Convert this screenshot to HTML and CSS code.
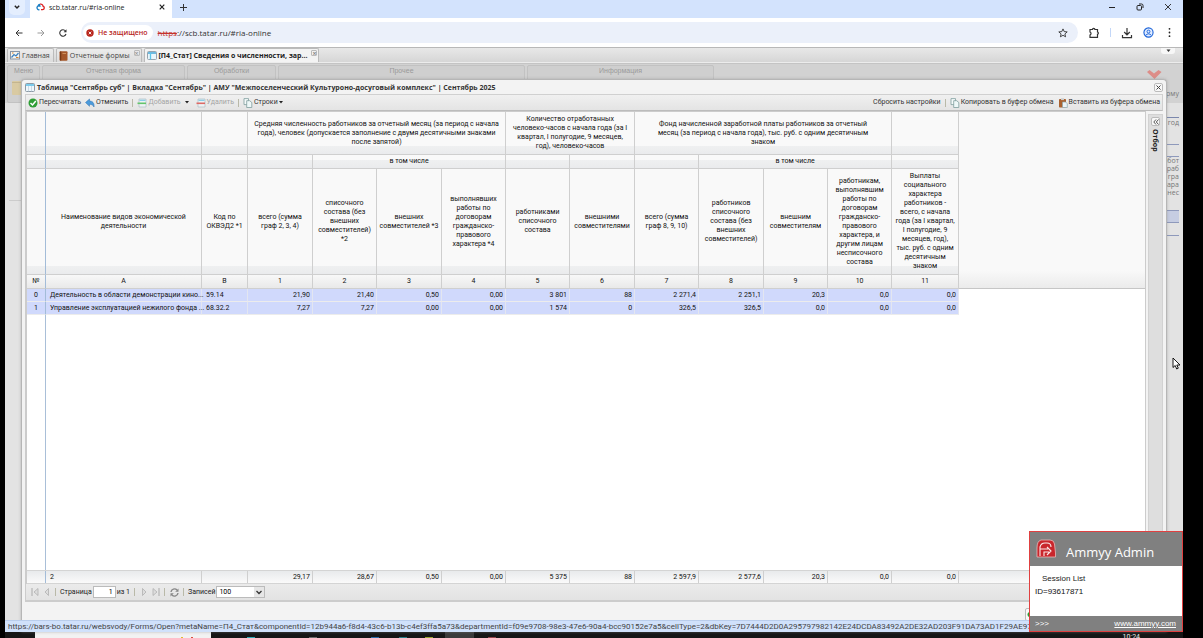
FILE: index.html
```html
<!DOCTYPE html>
<html lang="ru">
<head>
<meta charset="utf-8">
<title>scb.tatar.ru/#ria-online</title>
<link rel="stylesheet" href="styles.css">
</head>
<body>
<div class="screen">
  <header class="tabstrip">
    <button class="tab-search" aria-label="Поиск вкладок"><svg width="6" height="4" viewBox="0 0 6 4"><path d="M.8.7 3 3 5.200.7" fill="none" stroke="#222" stroke-width="1.400"/></svg></button>
    <div class="btab">
      <svg width="10" height="8" viewBox="0 0 10 8"><path d="M5 1.200a2.200 2.200 0 0 1 3 2 1.800 1.800 0 0 1-.4 3.500H6" fill="none" stroke="#d22" stroke-width="1.300"/><path d="M5.500 3.500a2 2 0 1 0-1 3.200M5 1.500A2 2 0 0 0 3 3" fill="none" stroke="#1b7fc4" stroke-width="1.300"/></svg>
      <span class="btab-text">scb.tatar.ru/#ria-online</span>
      <button aria-label="Закрыть вкладку"><svg width="6" height="6" viewBox="0 0 6 6"><path d="M.7.7 5.300 5.300M5.300.7.7 5.300" stroke="#222" stroke-width="1.200"/></svg></button>
    </div>
    <button class="newtab" aria-label="Новая вкладка"><svg width="7" height="7" viewBox="0 0 7 7"><path d="M3.500 0v7M0 3.500h7" stroke="#333" stroke-width="1"/></svg></button>
    <div class="wincontrols">
      <button aria-label="Свернуть"><svg width="8" height="8" viewBox="0 0 8 8"><path d="M1 4.500h6" stroke="#222"/></svg></button>
      <button aria-label="Развернуть"><svg width="8" height="8" viewBox="0 0 8 8"><rect x="1" y="2.500" width="4.500" height="4.500" rx="1" fill="none" stroke="#222"/><path d="M3 1h2.500A1.500 1.500 0 0 1 7 2.500V5" fill="none" stroke="#222"/></svg></button>
      <button aria-label="Закрыть"><svg width="8" height="8" viewBox="0 0 8 8"><path d="M1 1l6 6M7 1 1 7" stroke="#222" stroke-width=".9"/></svg></button>
    </div>
  </header>
  <div class="navbar">
    <button aria-label="Назад"><svg width="8" height="8" viewBox="0 0 8 8"><path d="M7.500 4H1M4 1 1 4l3 3" fill="none" stroke="#333"/></svg></button>
    <button aria-label="Вперёд"><svg width="8" height="8" viewBox="0 0 8 8"><path d="M.5 4H7M4 1l3 3-3 3" fill="none" stroke="#999"/></svg></button>
    <button aria-label="Обновить"><svg width="8" height="8" viewBox="0 0 8 8"><path d="M7 5A3.200 3.200 0 1 1 6.500 2" fill="none" stroke="#333" stroke-width="1.100"/><path d="M7.500.3V3.300H4.600z" fill="#333"/></svg></button>
    <div class="omnibox">
      <button class="chip"><svg width="8" height="8" viewBox="0 0 8 8"><circle cx="4" cy="4" r="3.700" fill="#b8261d"/><path d="M2.700 2.700l2.600 2.600M5.300 2.700 2.700 5.300" stroke="#fff" stroke-width=".9"/></svg>Не защищено</button>
      <a class="url" href="#ria-online"><s>https</s>://scb.tatar.ru/#ria-online</a>
      <button class="star" aria-label="В закладки"><svg width="10" height="10" viewBox="0 0 10 10"><path d="M5 .9l1.200 2.700 3 .3-2.300 2 .7 2.900L5 7.300 2.400 8.800l.7-2.900-2.300-2 3-.3z" fill="none" stroke="#333" stroke-width=".9"/></svg></button>
    </div>
    <div class="navicons">
      <button aria-label="Расширения"><svg width="12" height="12" viewBox="0 0 12 12"><path d="M2 2.500h2.500a1.200 1.200 0 0 1 2.400 0H9.500V5a1.200 1.200 0 0 1 0 2.300V10.300H2V8a1.600 1.600 0 0 0 0-3z" fill="none" stroke="#333" stroke-width="1.200"/></svg></button>
      <i class="navsep"></i>
      <button aria-label="Загрузки"><svg width="12" height="12" viewBox="0 0 12 12"><path d="M6 1v6.500M3.200 5 6 7.800 8.800 5M1.500 8v2.600h9V8" fill="none" stroke="#333" stroke-width="1.200"/></svg></button>
      <button aria-label="Профиль"><svg width="11" height="11" viewBox="0 0 12 12"><circle cx="6" cy="6" r="5" fill="#e3edff" stroke="#1a62d8" stroke-width="1.200"/><circle cx="6" cy="5" r="1.600" fill="none" stroke="#1a62d8"/><path d="M3 9c1.500-2 4.500-2 6 0" fill="none" stroke="#1a62d8"/></svg></button>
      <button aria-label="Меню браузера"><svg width="11" height="11" viewBox="0 0 11 11"><g fill="#222"><circle cx="5.500" cy="1.800" r=".9"/><circle cx="5.500" cy="5.500" r=".9"/><circle cx="5.500" cy="9.200" r=".9"/></g></svg></button>
    </div>
  </div>
  <main class="page">
    <nav class="apptabs">
      <a class="apptab" href="#main"><svg width="10" height="9" viewBox="0 0 10 9"><rect x=".5" y=".5" width="9" height="7.500" fill="#f4f4ee" stroke="#8a96a5"/><path d="M1.500 6.500 4 3.500l2 1.500L8.500 2" fill="none" stroke="#3a7fc0" stroke-width="1.200"/><path d="M6 6.500h2.500M2 2h1.500" stroke="#d9822b"/></svg>Главная</a>
      <a class="apptab" href="#forms"><svg width="9" height="10" viewBox="0 0 9 10"><rect x=".5" y=".3" width="8" height="9.400" rx="1" fill="#a4572a"/><path d="M1.700.5v9" stroke="#6b3312"/><path d="M3.500 2.500h3.500" stroke="#d8a069" stroke-width=".8"/></svg>Отчетные формы<i class="tabx">×</i></a>
      <a class="apptab active" href="#p4"><svg width="10" height="9" viewBox="0 0 10 9"><rect x=".5" y=".5" width="9" height="8" rx="1" fill="#e8f6fc" stroke="#97a4ae"/><path d="M1 2h8" stroke="#6db9df" stroke-width="2"/><path d="M3.500 2v6.500" stroke="#5cc5ea" stroke-width="1.300"/></svg>[П4_Стат] Сведения о численности, зар...<i class="tabx">×</i></a>
      <button class="tabmore" aria-label="Список вкладок"><svg width="5" height="4" viewBox="0 0 5 4"><path d="M.5 0.500h4L2.500 3z" fill="#333"/></svg></button>
    </nav>
    <div class="ribbon">
      <section class="rgroup g-menu">Меню<svg width="10" height="14" viewBox="0 0 10 14"><rect width="10" height="14" rx="1" fill="#d9caa2"/><path d="M0 1.500h10" stroke="#c4b58f"/></svg></section>
      <section class="rgroup g-form">Отчетная форма</section>
      <section class="rgroup g-proc">Обработки</section>
      <section class="rgroup g-other">Прочее</section>
      <section class="rgroup g-info">Информация</section>
      <svg class="redmark" width="16" height="10" viewBox="0 0 16 10"><path d="M1 2 3.500 0 8 3.500 12.500 0 15.500 2 8.500 9z" fill="#dd8d88"/></svg>
    </div>
    <div class="under">
      <div class="under-left"></div>
      <div class="under-right">
        <span class="u-form">рму</span><span class="u-year">год</span><span class="u-gap"></span>
        <span class="u-cell">абот<br>раб<br>гра<br>хара<br>нес</span><span class="u-sel"></span><span class="u-end"></span>
      </div>
    </div>

    <div class="window" role="dialog" aria-label="Таблица">
      <div class="wtitle">
        <svg width="10" height="9" viewBox="0 0 10 9"><rect x=".5" y=".5" width="9" height="8" rx="1" fill="#eef7fb" stroke="#8d9aa5"/><path d="M1 2h8" stroke="#5fc0e8" stroke-width="1.600"/><path d="M3.500 3v5.500M6.500 3v5.500" stroke="#bcd" stroke-width=".7"/></svg>
        <h1>Таблица "Сентябрь суб" | Вкладка "Сентябрь" | АМУ "Межпоселенческий Культуроно-досуговый комплекс" | Сентябрь 2025</h1>
        <button class="wclose" aria-label="Закрыть окно"><svg width="5" height="5" viewBox="0 0 5 5"><path d="M.5.5l4 4M4.500.5l-4 4" stroke="#444"/></svg></button>
      </div>
      <div class="toolbar">
        <button class="tb"><svg width="10" height="10" viewBox="0 0 10 10"><circle cx="5" cy="5" r="4.500" fill="#2f9e35"/><path d="M2.500 5l2 2 3.300-4" fill="none" stroke="#fff" stroke-width="1.500"/></svg>Пересчитать</button>
        <button class="tb"><svg width="10" height="10" viewBox="0 0 10 10"><path d="M.5 4.500 4.500 1v2c3 0 5 2 4.500 6C8 7 6.500 6.300 4.500 6.300v2z" fill="#4b9bdc" stroke="#2a6fae" stroke-width=".5"/></svg>Отменить</button>
        <i class="sep"></i>
        <button class="tb" disabled><svg width="10" height="10" viewBox="0 0 10 10"><path d="M2 1v8h7V1z" fill="#eef3f5" stroke="#b5c3c9" stroke-width=".8"/><path d="M2.500 2.300h6" stroke="#7fcbe8" stroke-width="1.200"/><path d="M.5 5.300h8.500" stroke="#64c46c" stroke-width="1.600"/></svg>Добавить<svg class="caret dark" width="4" height="3" viewBox="0 0 4 3"><path d="M0 0h4L2 2.500z"/></svg></button>
        <button class="tb" disabled><svg width="10" height="10" viewBox="0 0 10 10"><path d="M2 1v8h7V1z" fill="#eef3f5" stroke="#b5c3c9" stroke-width=".8"/><path d="M2.500 2.300h6" stroke="#7fcbe8" stroke-width="1.200"/><path d="M.5 5.300h8.500" stroke="#dd6a66" stroke-width="1.600"/></svg>Удалить</button>
        <i class="sep"></i>
        <button class="tb"><svg width="10" height="10" viewBox="0 0 10 10"><path d="M1 .6h4.500v6H1z" fill="#f5fafa" stroke="#7f9d9d" stroke-width=".8"/><path d="M3.700 2.700h3L8.800 4.500v5H3.700z" fill="#eef8f8" stroke="#7f9d9d" stroke-width=".8"/></svg>Строки<svg class="caret" width="4" height="3" viewBox="0 0 4 3"><path d="M0 0h4L2 2.500z"/></svg></button>
        <span class="spring"></span>
        <button class="tb">Сбросить настройки</button>
        <i class="sep"></i>
        <button class="tb"><svg width="10" height="10" viewBox="0 0 10 10"><path d="M1 .6h4.500v6H1z" fill="#f5fafa" stroke="#7f9d9d" stroke-width=".8"/><path d="M3.700 2.700h3L8.800 4.500v5H3.700z" fill="#eef8f8" stroke="#7f9d9d" stroke-width=".8"/></svg>Копировать в буфер обмена</button>
        <button class="tb"><svg width="10" height="10" viewBox="0 0 10 10"><rect x="1" y="1" width="7" height="8.500" rx=".8" fill="#a9612f"/><rect x="3" y=".3" width="3" height="1.800" fill="#ccc"/><path d="M4.500 4h3l1.800 1.500v4H4.500z" fill="#eaf3f6" stroke="#8aa3ab" stroke-width=".7"/></svg>Вставить из буфера обмена</button>
      </div>
      <div class="wbody">
        <div class="grid">
          <div class="headwrap">
            <table class="data">
              <colgroup><col class="c19"><col class="c156"><col class="c46"><col class="c65"><col class="c64"><col class="c65"><col class="c64"><col class="c64"><col class="c65"><col class="c64"><col class="c65"><col class="c64"><col class="c64"><col class="c67"></colgroup>
              <thead>
                <tr class="h1"><th></th><th></th><th></th><th colspan="4">Средняя численность работников за отчетный месяц (за период с начала года), человек (допускается заполнение с двумя десятичными знаками после запятой)</th><th colspan="2">Количество отработанных человеко-часов с начала года (за I квартал, I полугодие, 9 месяцев, год), человеко-часов</th><th colspan="4" class="wide">Фонд начисленной заработной платы работников за отчетный месяц (за период с начала года), тыс. руб. с одним десятичным знаком</th><th></th></tr>
                <tr class="h2"><th></th><th></th><th></th><th></th><th colspan="3">в том числе</th><th></th><th></th><th></th><th colspan="3">в том числе</th><th></th></tr>
                <tr class="h3"><th></th><th class="name">Наименование видов экономической деятельности</th><th>Код по ОКВЭД2 *1</th><th>всего (сумма граф 2, 3, 4)</th><th>списочного состава (без внешних совместителей) *2</th><th>внешних совместителей *3</th><th>выполнявших работы по договорам гражданско-правового характера *4</th><th>работниками списочного состава</th><th>внешними совместителями</th><th>всего (сумма граф 8, 9, 10)</th><th>работников списочного состава (без внешних совместителей)</th><th>внешним совместителям</th><th>работникам, выполнявшим работы по договорам гражданско-правового характера, и другим лицам несписочного состава</th><th>Выплаты социального характера работников - всего, с начала года (за I квартал, I полугодие, 9 месяцев, год), тыс. руб. с одним десятичным знаком</th></tr>
                <tr class="h4"><th>№</th><th>A</th><th>B</th><th>1</th><th>2</th><th>3</th><th>4</th><th>5</th><th>6</th><th>7</th><th>8</th><th>9</th><th>10</th><th>11</th></tr>
              </thead>
              <tbody>
                <tr><td>0</td><td>Деятельность в области демонстрации кино...</td><td>59.14</td><td>21,90</td><td>21,40</td><td>0,50</td><td>0,00</td><td>3 801</td><td>88</td><td>2 271,4</td><td>2 251,1</td><td>20,3</td><td>0,0</td><td>0,0</td></tr>
                <tr><td>1</td><td>Управление эксплуатацией нежилого фонда ...</td><td>68.32.2</td><td>7,27</td><td>7,27</td><td>0,00</td><td>0,00</td><td>1 574</td><td>0</td><td>326,5</td><td>326,5</td><td>0,0</td><td>0,0</td><td>0,0</td></tr>
              </tbody>
            </table>
            <div class="headfill"></div>
          </div>
          <div class="blank"></div>
          <div class="sumwrap">
            <table class="data sum">
              <colgroup><col class="c19"><col class="c156"><col class="c46"><col class="c65"><col class="c64"><col class="c65"><col class="c64"><col class="c64"><col class="c65"><col class="c64"><col class="c65"><col class="c64"><col class="c64"><col class="c67"></colgroup>
              <tbody><tr><td></td><td>2</td><td></td><td>29,17</td><td>28,67</td><td>0,50</td><td>0,00</td><td>5 375</td><td>88</td><td>2 597,9</td><td>2 577,6</td><td>20,3</td><td>0,0</td><td>0,0</td></tr></tbody>
            </table>
          </div>
        </div>
        <aside class="side"><button aria-label="Развернуть панель"><svg width="6" height="6" viewBox="0 0 6 6"><path d="M3 .5.8 3 3 5.500M5.500.5 3.300 3l2.200 2.500" fill="none" stroke="#444" stroke-width=".9"/></svg></button><span>Отбор</span></aside>
      </div>
      <div class="paging">
        <button disabled aria-label="Первая"><svg width="8" height="8" viewBox="0 0 8 8"><path d="M1 0v8" stroke="#aaa"/><path d="M7 .5v7L3 4z" fill="#ddd" stroke="#aaa" stroke-width=".7"/></svg></button>
        <button disabled aria-label="Предыдущая"><svg width="8" height="8" viewBox="0 0 8 8"><path d="M5.500.5v7L2 4z" fill="#ddd" stroke="#aaa" stroke-width=".7"/></svg></button>
        <i class="sep"></i>
        <label for="pg">Страница</label><input id="pg" type="text" value="1"><span>из 1</span>
        <i class="sep"></i>
        <button disabled aria-label="Следующая"><svg width="8" height="8" viewBox="0 0 8 8"><path d="M2.500.5v7L6 4z" fill="#ddd" stroke="#aaa" stroke-width=".7"/></svg></button>
        <button disabled aria-label="Последняя"><svg width="8" height="8" viewBox="0 0 8 8"><path d="M7 0v8" stroke="#aaa"/><path d="M1 .5v7L5 4z" fill="#ddd" stroke="#aaa" stroke-width=".7"/></svg></button>
        <i class="sep"></i>
        <button aria-label="Обновить таблицу"><svg width="9" height="9" viewBox="0 0 9 9"><path d="M1 4a3.500 3.500 0 0 1 6-2M8 5a3.500 3.500 0 0 1-6 2" fill="none" stroke="#888" stroke-width="1.400"/><path d="M8.500.5v3.300H5.200zM.5 8.500V5.200h3.300z" fill="#888"/></svg></button>
        <i class="sep"></i>
        <label for="ps">Записей</label>
        <span class="combo"><select id="ps"><option>100</option></select><svg width="10" height="10" viewBox="0 0 10 10"><rect width="10" height="10" fill="#e6e6e6"/><path d="M2.500 4 5 6.500 7.500 4" fill="none" stroke="#333" stroke-width="1.300"/></svg></span>
      </div>
      <div class="wfoot"><button aria-label="Сохранить"><svg width="5" height="5" viewBox="0 0 5 5"><circle cx="4" cy="2.500" r="2.500" fill="#2f9e35"/></svg></button></div>
    </div>
    <div class="status">https://bars-bo.tatar.ru/websvody/Forms/Open?metaName=П4_Стат&amp;componentId=12b944a6-f8d4-43c6-b13b-c4ef3ffa5a73&amp;departmentId=f09e9708-98e3-47e6-90a4-bcc90152e7a5&amp;cellType=2&amp;dbKey=7D7444D2D0A295797982142E24DCDA83492A2DE32AD203F91DA73AD1F29AE97&amp;actualDate=#</div>
    <aside class="ammyy">
      <div class="am-head"><svg width="21" height="20" viewBox="0 0 21 20"><path d="M5 1h9q4 0 4.500 4l1 9v4H1V9Q1 2 5 1z" fill="#c9262c" stroke="#e9b9b9" stroke-width=".8"/><path d="M4 17V8q1-4 5-4h2q4 0 4 4M4 10h8M8 17v-4h5M11 8l4 4-4 4" fill="none" stroke="#fbe9e9" stroke-width="1.100"/></svg><span>Ammyy Admin</span></div>
      <div class="am-body"><span>Session List</span><b>ID=93617871</b></div>
      <div class="am-foot"><span>&gt;&gt;&gt;</span><a href="#ammyy">www.ammyy.com</a></div>
    </aside>
    <svg class="cursor" width="9" height="13" viewBox="0 0 9 13"><path d="M1 1v9.500l2.200-2 1.500 3.500 1.600-.8L4.800 8H8z" fill="#fff" stroke="#000" stroke-width=".9"/></svg>
  </main>
  <footer class="taskbar"><span class="start"></span><span class="search"><i class="y"></i><i class="r"></i></span><i class="app cyan"></i><i class="app grey"></i><i class="app blue"></i><i class="app teal"></i><i class="app lime"></i><span class="app open"></span><i class="app red"></i><time>10:24</time></footer>
</div>
</body>
</html>
```
FILE: styles.css
```css
* { box-sizing: border-box; }
html, body { height: 100%; }
body { margin: 0; background: #000; overflow: hidden; font-family: Roboto, "Liberation Sans", sans-serif; font-size: 7px; line-height: 9px; color: #222; }
button { font: inherit; color: inherit; background: none; border: 0; padding: 0; display: flex; align-items: center; justify-content: center; }
svg { display: block; flex: none; }
i { font-style: normal; }
a { color: inherit; text-decoration: none; }

.screen { height: 100vh; margin: 0 20px 0 5px; display: flex; flex-direction: column; }

.tabstrip { height: 18px; background: #d3e3fd; display: flex; align-items: center; padding-bottom: 4px; }
.tab-search { width: 16px; height: 15px; margin-left: 4px; background: #e4eefe; border-radius: 0 0 5px 5px; }
.btab { align-self: flex-start; height: 18px; width: 142px; margin-left: 5px; background: #fff; display: flex; align-items: center; padding: 0 7px 4px 5px; gap: 4px; font-family: "Open Sans", sans-serif; font-size: 7px; }
.btab-text { flex: 1; white-space: nowrap; }
.newtab { margin-left: 8px; }
.wincontrols { margin-left: auto; display: flex; gap: 20px; padding-right: 11px; }

.navbar { height: 29px; background: #fff; display: flex; align-items: center; padding: 0 8px 0 10px; gap: 14px; }
.omnibox { flex: 1; height: 21px; border-radius: 11px; background: #ebf0fa; display: flex; align-items: center; padding: 0 10px 0 2px; font-family: "Open Sans", sans-serif; font-size: 8px; }
.chip { height: 15px; border-radius: 8px; background: #fff; color: #b8261d; padding: 0 5px 0 3px; gap: 4px; font-size: 7px; font-weight: 600; white-space: nowrap; }
.url { flex: 1; margin-left: 5px; color: #333; }
.url s { color: #c5332b; }
.navicons { display: flex; align-items: center; gap: 10px; margin-left: -4px; }
.navsep { width: 1px; height: 9px; background: #c3d7f8; }

.page { flex: 1; min-height: 0; position: relative; background: #e3e3e3; display: flex; flex-direction: column; }
.apptabs { height: 16px; background: linear-gradient(#e8e8e8, #d6d6d6); border-top: 1px solid #b8b8b8; border-bottom: 1px solid #ececec; display: flex; padding: 0 8px 0 2px; gap: 2px; font-family: "Open Sans", sans-serif; color: #444; }
.apptab { display: flex; align-items: center; gap: 2px; padding: 0 3px 0 2px; border: 1px solid #bbb; border-bottom: 0; border-radius: 2px 2px 0 0; background: linear-gradient(#ececec, #dcdcdc); white-space: nowrap; height: 14px; }
.apptab.active { background: #f3f3f3; color: #222; font-weight: 700; }
.tabx { width: 6px; height: 6px; line-height: 5px; border: 1px solid #bbb; border-radius: 1px; color: #888; text-align: center; align-self: flex-start; margin: 1px 0 0 2px; }
.apptab .tabx { margin-right: -2px; }
.tabmore { margin-left: auto; width: 14px; height: 6px; background: #f7f7f7; border-radius: 0 0 3px 3px; }

.ribbon { height: 40px; background: #d2d2d2; border-top: 1px solid #c4c4c4; display: flex; gap: 2px; padding: 1px 21px 0 2px; color: #9a9a9a; font-family: "Liberation Sans", sans-serif; }
.rgroup { height: 38px; border: 1px solid #c2c2c2; border-radius: 2px; background: #cfcfcf; text-align: center; }
.g-menu { width: 33px; }
.g-menu svg { margin: 6px 0 0 4px; }
.g-form { width: 143px; }
.g-proc { width: 89px; }
.g-other { width: 247px; }
.g-info { width: 187px; }
.redmark { margin: 5px 0 0 auto; }
.under { flex: 1; display: flex; justify-content: space-between; }
.under-left { width: 16px; height: 98px; margin-left: 4px; border-bottom: 1px solid #ccc; }
.under-right { width: 16px; margin-right: 4px; margin-top: -14px; display: flex; flex-direction: column; font-family: "Open Sans", sans-serif; color: #777; text-align: right; }
.u-form { height: 29px; border-bottom: 1px solid #7b87ac; }
.u-year { height: 27px; border-bottom: 1px solid #8e99bb; }
.u-gap { height: 12px; border-bottom: 1px solid #8e99bb; }
.u-cell { height: 54px; line-height: 8px; border-bottom: 1px solid #8e99bb; }
.u-sel { height: 12px; background: #c6cde2; border-bottom: 1px solid #8e99bb; }
.u-end { height: 13px; border-bottom: 1px solid #8e99bb; }

.window { position: absolute; inset: 32px 16px 0 16px; border: 1px solid #b6b6b6; border-bottom: 0; border-radius: 4px 4px 0 0; background: #f3f3f3; padding: 0 3px; display: flex; flex-direction: column; box-shadow: 0 0 3px #8888; }
.wtitle { height: 14px; display: flex; align-items: center; gap: 2px; }
.wtitle h1 { margin: 0; flex: 1; font: 700 7px/9px "Open Sans", sans-serif; color: #333; white-space: nowrap; }
.wclose { width: 9px; height: 9px; border: 1px solid #bbb; border-radius: 2px; background: #f8f8f8; }
.toolbar { height: 17px; border: 1px solid #d0d0d0; border-bottom-color: #bcbcbc; background: linear-gradient(#f0f0f0, #e4e4e4); display: flex; align-items: center; gap: 4px; padding: 0 2px; white-space: nowrap; }
.tb { gap: 1px; color: #333; }
.tb:disabled { color: #a4a4a4; }
.caret { fill: #222; }
.caret.dark { margin: 0 3px; }
.sep { width: 1px; height: 8px; background: #b9b9a8; }
.spring { flex: 1; }
.wbody { flex: 1; min-height: 0; display: flex; gap: 2px; }
.grid { flex: 1; min-width: 0; display: flex; flex-direction: column; background: #fff; border: 1px solid #ccc; border-width: 1px 1px 0 2px; overflow: hidden; }
.headwrap { display: flex; }
.headfill { flex: 1; height: 177px; background: linear-gradient(#f9f9f9 90%, #ebebeb); border-bottom: 1px solid #c6c6c6; }
.blank { flex: 1; background: linear-gradient(90deg, transparent 18px, #a9bfd8 18px 19px, transparent 19px); }

.data { table-layout: fixed; width: 932px; border-collapse: separate; border-spacing: 0; flex: none; }
.c19 { width: 19px; } .c46 { width: 46px; } .c64 { width: 64px; } .c65 { width: 65px; } .c67 { width: 67px; } .c156 { width: 156px; }
.data th { padding: 0 3px; font-weight: 400; color: #111; text-align: center; vertical-align: middle; border-right: 1px solid #cfcfcf; border-bottom: 1px solid #cfcfcf; background: linear-gradient(to top, #eaebed 0, #eff0f1 8px, #f9f9f9 8px); }
.data .h1 th { height: 43px; padding: 0 4px; }
.data .h1 .wide { padding: 0 14px; }
.data .h2 th { height: 14px; }
.data .h3 th { height: 106px; padding: 0 2px; }
.data .h3 .name { padding: 0 15px; }
.data .h4 th { height: 14px; background: linear-gradient(#f8f8f8, #e9e9e9); }
.data td { height: 13px; padding: 0 2px; text-align: right; background: #d0d9fc; border-right: 1px solid #e3e6f0; border-bottom: 1px solid #ececec; white-space: nowrap; color: #111; }
.data th:first-child, .data td:first-child { text-align: center; border-right-color: #a3bcd8; }
.data td:nth-child(2), .data td:nth-child(3) { text-align: left; padding: 0 0 0 4px; }
.sumwrap { background: linear-gradient(#e8eaec, #fafafa); border-top: 1px solid #d4d4d4; border-bottom: 1px solid #d4d4d4; }
.sum td { background: none; border-bottom: 0; border-right-color: #cfcfcf; height: 12px; }
.side { width: 15px; border: 1px solid #d2d2d2; border-bottom: 0; background: #dedede; display: flex; flex-direction: column; align-items: center; gap: 3px; padding-top: 2px; margin-top: 3px; }
.side button { width: 9px; height: 9px; border: 1px solid #bbb; border-radius: 2px; background: #f8f8f8; }
.side span { writing-mode: vertical-rl; font: 700 7px/9px "Open Sans", sans-serif; }
.paging { height: 18px; margin-right: 17px; border: 1px solid #ccc; border-width: 0 1px 2px; background: linear-gradient(#ebebeb, #e3e3e3); display: flex; align-items: center; gap: 4px; padding-left: 5px; white-space: nowrap; }
.paging label { margin-right: -3px; }
.paging input { width: 23px; height: 12px; border: 1px solid #bbb; padding: 0 2px; text-align: right; font: inherit; background: #fff; margin-right: -3px; }
.paging .sep + button { margin-left: 1px; }
.combo { display: flex; align-items: center; width: 49px; height: 12px; border: 1px solid #bbb; background: #fff; }
.combo select { appearance: none; flex: 1; width: 38px; border: 0; padding: 0 2px; font: inherit; background: #fff; }
.wfoot { height: 30px; display: flex; justify-content: flex-end; padding: 6px 118px 0 0; }
.wfoot button { width: 20px; height: 13px; border: 1px solid #bbb; border-radius: 2px; background: #fafafa; justify-content: flex-start; }

.status { position: absolute; left: 0; bottom: 0; height: 12px; padding: 0 4px 0 3px; background: #d0e1fb; border: 1px solid #b9cdec; border-width: 1px 1px 0 0; border-radius: 0 3px 0 0; font-size: 8px; line-height: 11px; color: #444; white-space: nowrap; }
.ammyy { position: absolute; right: 0; bottom: 0; width: 154px; border: 1px solid #e04040; background: #fff; }
.am-head { height: 34px; background: #808080; display: flex; align-items: center; gap: 9px; padding-left: 6px; color: #fff; font: 13px/16px "Open Sans", sans-serif; }
.am-head span { padding-top: 5px; }
.am-body { height: 50px; padding: 6px 5px; display: flex; flex-direction: column; font-size: 8px; line-height: 13px; font-family: "Liberation Sans", sans-serif; }
.am-body span { padding-left: 7px; }
.am-body b { font-weight: 400; color: #111; }
.am-foot { height: 15px; background: #808080; color: #fff; display: flex; justify-content: space-between; align-items: center; padding: 0 6px 0 5px; font-size: 8px; font-family: "Liberation Sans", sans-serif; }
.am-foot a { text-decoration: underline; }
.cursor { position: absolute; right: 2px; top: 310px; }

.taskbar { height: 6px; background: #161616; display: flex; overflow: hidden; padding-right: 43px; }
.start { width: 30px; }
.search { width: 176px; background: #f2f2f2; display: flex; align-items: flex-end; justify-content: flex-end; gap: 8px; padding-right: 18px; margin-right: 36px; }
.search i { width: 2px; height: 1px; margin-top: 5px; }
.y { background: #e5b92e; } .r { background: #d8503f; }
.app { width: 8px; height: 1px; margin: 5px 54px 0 0; }
.cyan { background: #2aa9b5; } .grey { background: #6a6a6a; } .blue { background: #2a6aa8; margin-right: 20px; } .teal { background: #267c86; margin-right: 18px; } .lime { background: #9aa52e; margin-right: 12px; }
.open { width: 29px; height: 6px; margin: 0 14px 0 0; background: #3b3b3b; }
.red { background: #93444a; }
.taskbar time { margin-left: auto; color: #eee; line-height: 10px; }
```
